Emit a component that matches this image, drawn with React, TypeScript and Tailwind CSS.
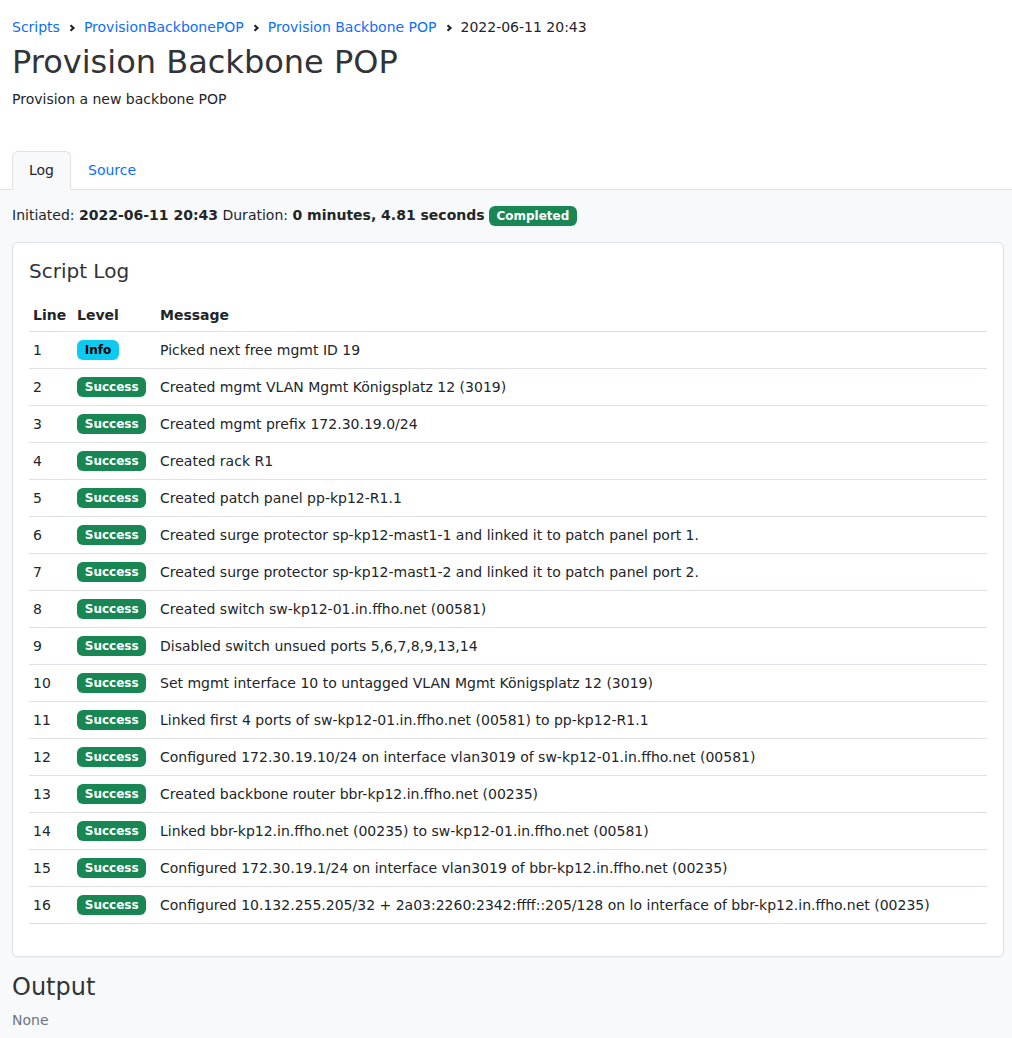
import React from "react";

const LOG: { level: "Info" | "Success"; msg: string }[] = [
  { level: "Info", msg: "Picked next free mgmt ID 19" },
  { level: "Success", msg: "Created mgmt VLAN Mgmt Königsplatz 12 (3019)" },
  { level: "Success", msg: "Created mgmt prefix 172.30.19.0/24" },
  { level: "Success", msg: "Created rack R1" },
  { level: "Success", msg: "Created patch panel pp-kp12-R1.1" },
  { level: "Success", msg: "Created surge protector sp-kp12-mast1-1 and linked it to patch panel port 1." },
  { level: "Success", msg: "Created surge protector sp-kp12-mast1-2 and linked it to patch panel port 2." },
  { level: "Success", msg: "Created switch sw-kp12-01.in.ffho.net (00581)" },
  { level: "Success", msg: "Disabled switch unsued ports 5,6,7,8,9,13,14" },
  { level: "Success", msg: "Set mgmt interface 10 to untagged VLAN Mgmt Königsplatz 12 (3019)" },
  { level: "Success", msg: "Linked first 4 ports of sw-kp12-01.in.ffho.net (00581) to pp-kp12-R1.1" },
  { level: "Success", msg: "Configured 172.30.19.10/24 on interface vlan3019 of sw-kp12-01.in.ffho.net (00581)" },
  { level: "Success", msg: "Created backbone router bbr-kp12.in.ffho.net (00235)" },
  { level: "Success", msg: "Linked bbr-kp12.in.ffho.net (00235) to sw-kp12-01.in.ffho.net (00581)" },
  { level: "Success", msg: "Configured 172.30.19.1/24 on interface vlan3019 of bbr-kp12.in.ffho.net (00235)" },
  { level: "Success", msg: "Configured 10.132.255.205/32 + 2a03:2260:2342:ffff::205/128 on lo interface of bbr-kp12.in.ffho.net (00235)" },
];

function Chevron() {
  return (
    <span className="inline-flex items-center px-2">
      <svg className="w-[8px] h-[8px] text-[#212529]" viewBox="0 0 8 8" fill="none" stroke="currentColor" strokeWidth="2.2" aria-hidden="true">
        <path d="M2.5 1.2L5.5 4L2.5 6.8" />
      </svg>
    </span>
  );
}

function Badge({ kind, children }: { kind: "Info" | "Success"; children: React.ReactNode }) {
  return (
    <span
      className={`inline-flex items-center h-[20px] text-[12px] font-bold leading-none px-[7.8px] rounded-[6px] whitespace-nowrap align-middle ${
        kind === "Info" ? "bg-[#0dcaf0] text-black" : "bg-[#198754] text-white"
      }`}
    >
      {children}
    </span>
  );
}

export default function App() {
  return (
    <div className="min-h-[1038px] bg-[#f8f9fa] text-[14px] leading-[21px] text-[#212529] font-['DejaVu_Sans',sans-serif]">
      {/* Page header */}
      <div className="bg-white border-b border-[#dee2e6]">
        <div className="px-3 pt-[17px]">
          <nav className="flex items-center">
            <a className="text-[#0d6efd]">Scripts</a>
            <Chevron />
            <a className="text-[#0d6efd]">ProvisionBackbonePOP</a>
            <Chevron />
            <a className="text-[#0d6efd]">Provision Backbone POP</a>
            <Chevron />
            <span>2022-06-11 20:43</span>
          </nav>
          <h1 className="text-[32px] leading-[38px] mt-[5px] text-[#303438]">Provision Backbone POP</h1>
          <p className="mt-[8px]">Provision a new backbone POP</p>
        </div>
        <div className="flex px-3 mt-[41px] -mb-px">
          <div className="px-4 py-2 leading-[21px] bg-[#f8f9fa] border border-[#dee2e6] border-b-[#f8f9fa] rounded-t-[6px]">Log</div>
          <div className="px-4 py-2 leading-[21px] border border-transparent text-[#0d6efd]">Source</div>
        </div>
      </div>

      {/* Tab content */}
      <div className="pl-3 pr-2 pt-[15px]">
        <div className="flex items-center h-[21px]">
          <span className="whitespace-pre">Initiated: </span>
          <strong>2022-06-11 20:43</strong>
          <span className="whitespace-pre"> Duration: </span>
          <strong>0 minutes, 4.81 seconds</strong>
          <span className="ml-1">
            <Badge kind="Success">Completed</Badge>
          </span>
        </div>

        <div className="mt-4 bg-white border border-[#dee2e6] rounded-[6px] shadow-[0_1px_2px_rgba(0,0,0,0.04)] p-4">
          <h5 className="text-[20px] leading-[24px] text-[#303438] mb-3">Script Log</h5>
          <table className="w-full table-fixed border-collapse mb-4 leading-[20px]">
            <thead>
              <tr className="border-b border-[#dee2e6]">
                <th className="w-[44px] text-left font-bold px-1 pt-[10px] pb-[6px]">Line</th>
                <th className="w-[83px] text-left font-bold px-1 pt-[10px] pb-[6px]">Level</th>
                <th className="text-left font-bold px-1 pt-[10px] pb-[6px]">Message</th>
              </tr>
            </thead>
            <tbody>
              {LOG.map((r, i) => (
                <tr key={i} className="border-b border-[#dee2e6]">
                  <td className="px-1 py-2 h-[37px]">{i + 1}</td>
                  <td className="px-1 py-2">
                    <div className="flex items-center h-[20px]">
                      <Badge kind={r.level}>{r.level}</Badge>
                    </div>
                  </td>
                  <td className="px-1 py-2 whitespace-nowrap">{r.msg}</td>
                </tr>
              ))}
            </tbody>
          </table>
        </div>

        <h2 className="text-[24px] leading-[29px] text-[#303438] mt-4">Output</h2>
        <p className="mt-2 text-[#6c757d]">None</p>
      </div>
    </div>
  );
}
